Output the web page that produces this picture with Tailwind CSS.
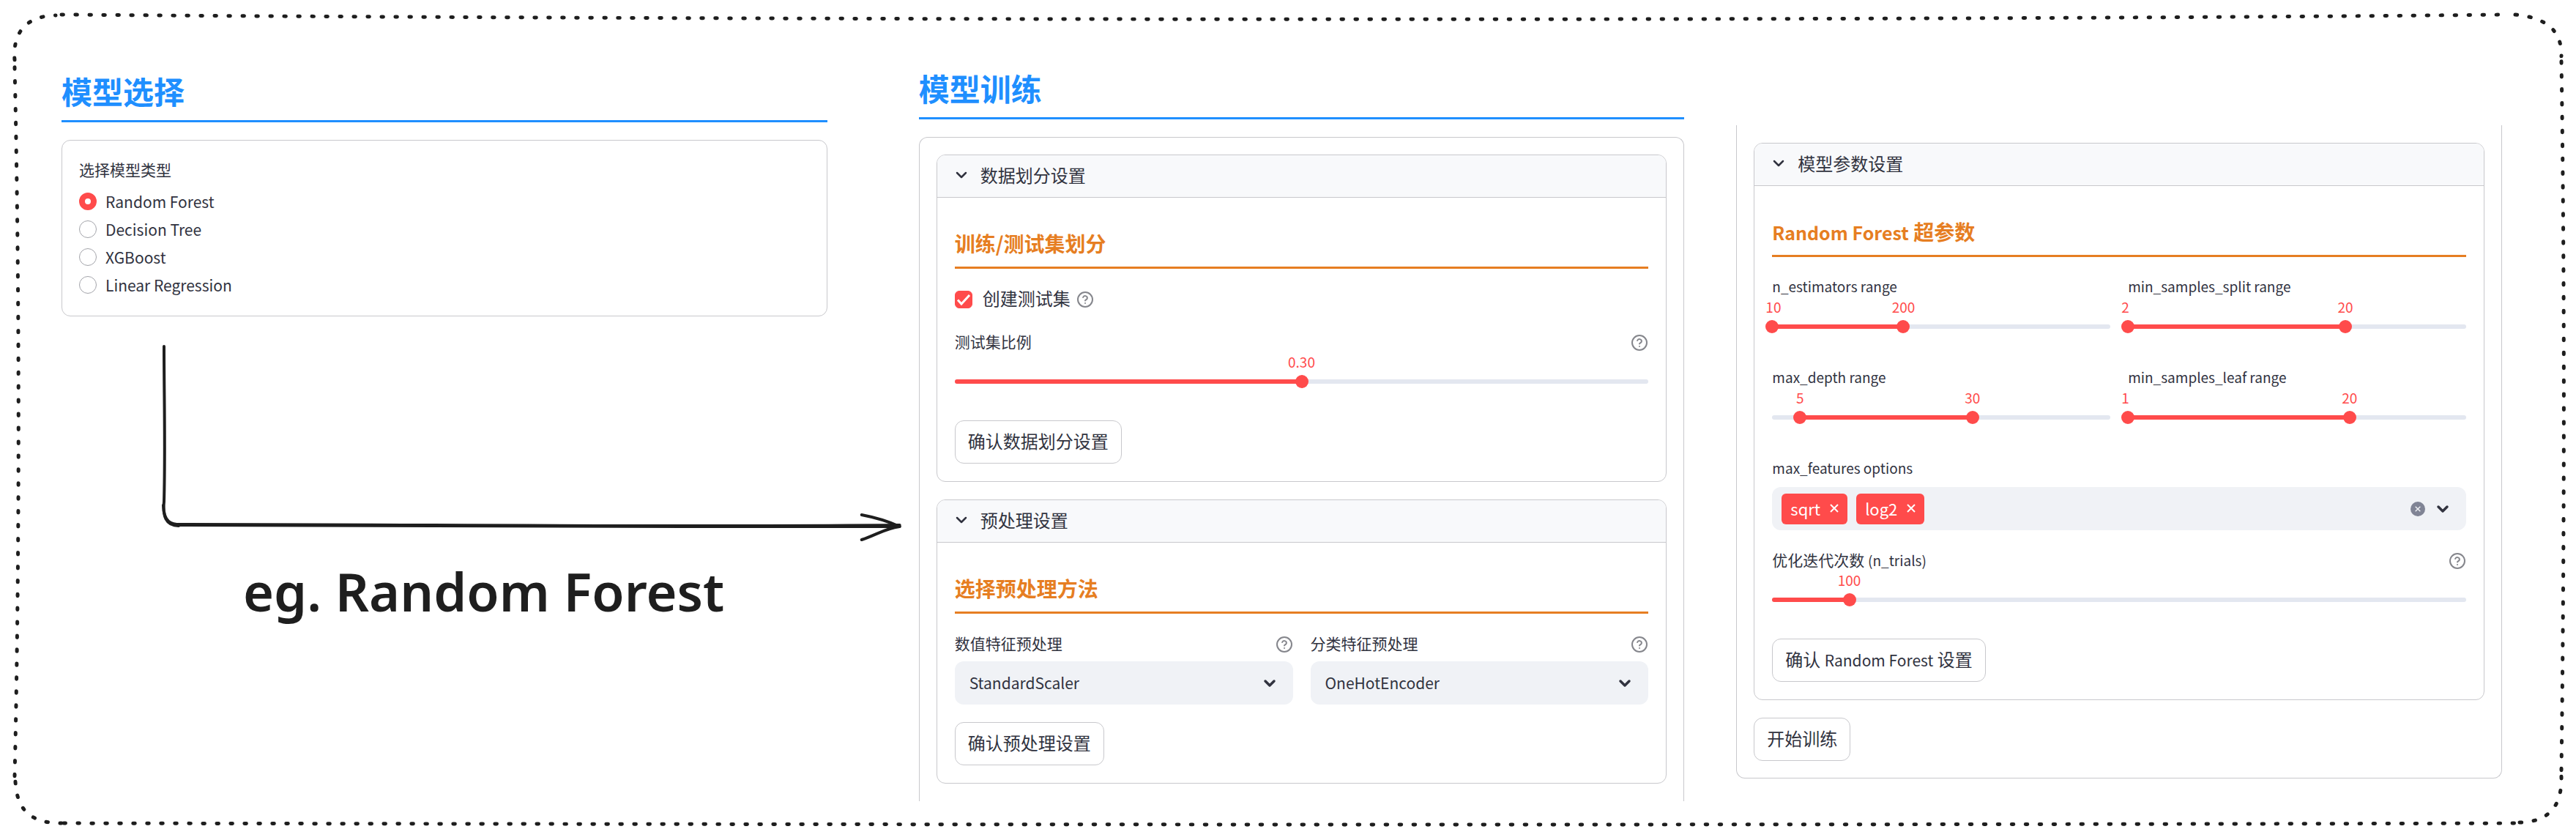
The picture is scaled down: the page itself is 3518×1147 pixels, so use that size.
<!DOCTYPE html>
<html lang="zh-CN">
<head>
<meta charset="utf-8">
<meta name="viewport" content="width=device-width, initial-scale=1">
<title>模型训练</title>
<script src="https://cdn.jsdelivr.net/npm/@tailwindcss/browser@4"></script>
</head>
<body class="bg-white font-['Noto_Sans_CJK_SC',sans-serif] text-[#31333f]">

<!-- shared icons -->
<svg class="hidden" aria-hidden="true">
  <symbol id="help" viewBox="0 0 24 24" fill="none" stroke="currentColor" stroke-width="2" stroke-linecap="round" stroke-linejoin="round">
    <circle cx="12" cy="12" r="10"/><path d="M9.1 9a3 3 0 0 1 5.8 1c0 2-2.9 2.6-2.9 3.6M12 17h.01"/>
  </symbol>
  <symbol id="chevron" viewBox="0 0 24 24" fill="none" stroke="currentColor" stroke-linecap="round" stroke-linejoin="round">
    <path d="M6 9l6 6 6-6"/>
  </symbol>
  <symbol id="cross" viewBox="0 0 12 12" fill="none" stroke="currentColor" stroke-width="2"><path d="M1 1l10 10M11 1L1 11"/></symbol>
</svg>

<main class="relative flex pr-[101px] pl-[84px] pb-[49px]">

  <!-- hand-drawn dotted frame -->
  <svg class="pointer-events-none absolute inset-0 h-full w-full" viewBox="0 0 3518 1147" preserveAspectRatio="none" fill="none" stroke="#1e1e1e" stroke-width="5" stroke-linecap="round" stroke-dasharray="2.5 16.5" aria-hidden="true">
    <path d="M84 20C900 27 2500 30 3427 20"/>
    <path d="M3435 20C3475 24 3499 40 3498 77"/>
    <path d="M3498 84C3503 400 3502 760 3498 1056"/>
    <path d="M3498 1064C3499 1106 3480 1126 3441 1127"/>
    <path d="M87 1128C1200 1130 2400 1131 3435 1128"/>
    <path d="M21 1071C23 1110 42 1128 84 1128"/>
    <path d="M20 92C27 400 27 760 20 1064"/>
    <path d="M20 82C17 42 38 22 76 21"/>
  </svg>

  <!-- model selection -->
  <section class="mr-[125px] min-w-0 flex-1 pt-[100px]">
    <h2 class="border-b-[3px] border-[#1f8fff] pb-4 text-[42px] leading-[48px] font-bold text-[#1f8fff]">模型选择</h2>
    <fieldset class="mt-6 rounded-xl border border-[#c8c8cc] p-[23px]">
      <legend class="float-left h-9 w-full text-[21px] leading-[32px]">选择模型类型</legend>
      <div class="clear-both pt-[5px] text-[21px] leading-[38px]">
        <label class="flex h-[38px] items-center gap-3"><input type="radio" name="model" checked class="size-6 appearance-none rounded-full border border-[#a3a4aa] checked:border-8 checked:border-[#ff4b4b]">Random Forest</label>
        <label class="flex h-[38px] items-center gap-3"><input type="radio" name="model" class="size-6 appearance-none rounded-full border border-[#a3a4aa] checked:border-8 checked:border-[#ff4b4b]">Decision Tree</label>
        <label class="flex h-[38px] items-center gap-3"><input type="radio" name="model" class="size-6 appearance-none rounded-full border border-[#a3a4aa] checked:border-8 checked:border-[#ff4b4b]">XGBoost</label>
        <label class="flex h-[38px] items-center gap-3"><input type="radio" name="model" class="size-6 appearance-none rounded-full border border-[#a3a4aa] checked:border-8 checked:border-[#ff4b4b]">Linear Regression</label>
      </div>
    </fieldset>
    <div class="mt-[38px] -mr-[104px] ml-[136px]">
      <svg class="block h-[270px] w-full" viewBox="220 470 1014 270" preserveAspectRatio="none" fill="none" stroke="#1e1e1e" stroke-width="4" stroke-linecap="round" stroke-linejoin="round" aria-hidden="true">
        <path d="M224 473C224 540 226 610 224 685C222 704 226 718 244 718"/>
        <path d="M223 690C224 712 232 717 250 716C560 716 900 720 1229 717"/>
        <path d="M246 717C560 719 900 719 1229 719"/>
        <path d="M1177 703C1198 707 1216 713 1229 719C1208 722 1198 730 1177 737"/>
      </svg>
    </div>
    <p class="mt-[22px] ml-[248px] font-['Excalifont','Noto_Sans',sans-serif] text-[72px] leading-[90px] font-semibold whitespace-nowrap text-[#1e1e1e]">eg. Random Forest</p>
  </section>

  <!-- model training -->
  <section class="mr-[71px] min-w-0 flex-1 pt-[96px]">
    <h2 class="border-b-[3px] border-[#1f8fff] pb-4 text-[42px] leading-[48px] font-bold text-[#1f8fff]">模型训练</h2>
    <div class="mt-6 flex flex-col gap-6 rounded-t-xl border-x border-t border-[#c8c8cc] px-[23px] pt-[23px] pb-6">

      <details open class="overflow-hidden rounded-xl border border-[#c8c8cc]">
        <summary class="flex h-[58px] list-none items-center gap-[14px] border-b border-[#c8c8cc] bg-[#f8f9fb] px-[21px] pb-[3px] text-[24px] leading-[54px]">
          <svg class="size-6 stroke-[2.5]"><use href="#chevron"/></svg>数据划分设置
        </summary>
        <div class="flex flex-col items-start gap-6 px-6 pb-6 pt-[46px]">
          <h3 class="w-full border-b-[3px] border-[#e67e22] pb-4 text-[28px] leading-[32px] font-bold text-[#e67e22]">训练/测试集划分</h3>
          <div class="flex h-[35px] items-center">
            <label class="flex items-center gap-[14px] text-[24px] leading-[32px]">
              <span class="grid size-6 place-items-center">
                <input type="checkbox" checked class="size-6 appearance-none rounded-md border border-[#a3a4aa] [grid-area:1/1] checked:border-[#ff4b4b] checked:bg-[#ff4b4b]">
                <svg class="pointer-events-none size-6 [grid-area:1/1]" viewBox="0 0 24 24" fill="none" stroke="#fff" stroke-width="3"><path d="M4 12.500l5 5.500L20 6"/></svg>
              </span><span class="pb-[3px]">创建测试集</span></label>
            <svg class="ml-2 size-6 text-[#85868c]"><use href="#help"/></svg>
          </div>
          <div class="w-full">
            <div class="flex h-9 items-center justify-between"><label for="ratio" class="pb-1 text-[21px] leading-[32px]">测试集比例</label><svg class="size-6 text-[#85868c]"><use href="#help"/></svg></div>
            <div class="relative h-[26px] text-[19px] leading-[16px] text-[#ff4b4b]"><output for="ratio" class="absolute -translate-x-1/2" style="left:50%">0.30</output></div>
            <div class="mb-[20px] grid h-[18px] items-center">
              <div class="h-[6px] overflow-hidden rounded-full bg-[#e3e7f0] [grid-area:1/1]"><div class="h-full bg-[#ff4b4b]" style="width:50%"></div></div>
              <input id="ratio" type="range" min="0.1" max="0.5" step="0.01" value="0.3" class="-mx-[9px] h-[18px] appearance-none bg-transparent [grid-area:1/1] [&::-webkit-slider-thumb]:size-[18px] [&::-webkit-slider-thumb]:appearance-none [&::-webkit-slider-thumb]:rounded-full [&::-webkit-slider-thumb]:bg-[#ff4b4b]">
            </div>
          </div>
          <button class="h-[59px] rounded-xl border border-[#c8c8cc] px-[17px] pb-[3px] text-[24px] leading-[50px]">确认数据划分设置</button>
        </div>
      </details>

      <details open class="overflow-hidden rounded-xl border border-[#c8c8cc]">
        <summary class="flex h-[58px] list-none items-center gap-[14px] border-b border-[#c8c8cc] bg-[#f8f9fb] px-[21px] pb-[3px] text-[24px] leading-[54px]">
          <svg class="size-6 stroke-[2.5]"><use href="#chevron"/></svg>预处理设置
        </summary>
        <div class="flex flex-col items-start gap-6 px-6 pb-6 pt-[46px]">
          <h3 class="w-full border-b-[3px] border-[#e67e22] pb-4 text-[28px] leading-[32px] font-bold text-[#e67e22]">选择预处理方法</h3>
          <div class="grid w-full grid-cols-2 gap-6">
            <div>
              <div class="mb-[5px] flex h-9 items-center justify-between"><label for="num" class="pb-1 text-[21px] leading-[32px]">数值特征预处理</label><svg class="size-6 text-[#85868c]"><use href="#help"/></svg></div>
              <div class="grid items-center">
                <select id="num" class="h-[59px] w-full appearance-none rounded-xl bg-[#f0f2f6] px-5 text-[21px] [grid-area:1/1]"><option>StandardScaler</option></select>
                <svg class="pointer-events-none mr-5 size-6 justify-self-end stroke-[3.5] [grid-area:1/1]"><use href="#chevron"/></svg>
              </div>
            </div>
            <div>
              <div class="mb-[5px] flex h-9 items-center justify-between"><label for="cat" class="pb-1 text-[21px] leading-[32px]">分类特征预处理</label><svg class="size-6 text-[#85868c]"><use href="#help"/></svg></div>
              <div class="grid items-center">
                <select id="cat" class="h-[59px] w-full appearance-none rounded-xl bg-[#f0f2f6] px-5 text-[21px] [grid-area:1/1]"><option>OneHotEncoder</option></select>
                <svg class="pointer-events-none mr-5 size-6 justify-self-end stroke-[3.5] [grid-area:1/1]"><use href="#chevron"/></svg>
              </div>
            </div>
          </div>
          <button class="h-[59px] rounded-xl border border-[#c8c8cc] px-[17px] pb-[3px] text-[24px] leading-[50px]">确认预处理设置</button>
        </div>
      </details>
    </div>
  </section>

  <!-- model parameters -->
  <section class="min-w-0 flex-1 pt-[171px]">
    <div class="flex flex-col items-start gap-6 rounded-b-xl border-x border-b border-[#c8c8cc] px-[23px] pt-6 pb-[23px]">
      <details open class="w-full overflow-hidden rounded-xl border border-[#c8c8cc]">
        <summary class="flex h-[58px] list-none items-center gap-[14px] border-b border-[#c8c8cc] bg-[#f8f9fb] px-[21px] pb-[3px] text-[24px] leading-[54px]">
          <svg class="size-6 stroke-[2.5]"><use href="#chevron"/></svg>模型参数设置
        </summary>
        <div class="flex flex-col items-start gap-6 px-6 pb-6 pt-[46px]">
          <h3 class="w-full border-b-[3px] border-[#e67e22] pb-4 text-[28px] leading-[32px] font-bold text-[#e67e22]"><span class="text-[25px] leading-none">Random Forest</span> 超参数</h3>

          <div class="grid w-full grid-cols-2 gap-6">
            <div role="group" aria-labelledby="l1">
              <div id="l1" class="h-9 text-[19px] leading-[32px]">n_estimators range</div>
              <div class="relative h-[26px] text-[19px] leading-[16px] text-[#ff4b4b]"><output class="absolute -left-[9px]">10</output><output class="absolute -translate-x-1/2" style="left:38.8%">200</output></div>
              <div class="mb-[20px] grid h-[18px] items-center">
                <div class="h-[6px] overflow-hidden rounded-full bg-[#e3e7f0] [grid-area:1/1]"><div class="h-full bg-[#ff4b4b]" style="width:38.8%"></div></div>
                <input type="range" aria-label="min" min="10" max="500" value="10" class="pointer-events-none -mx-[9px] h-[18px] appearance-none bg-transparent [grid-area:1/1] [&::-webkit-slider-thumb]:pointer-events-auto [&::-webkit-slider-thumb]:size-[18px] [&::-webkit-slider-thumb]:appearance-none [&::-webkit-slider-thumb]:rounded-full [&::-webkit-slider-thumb]:bg-[#ff4b4b]">
                <input type="range" aria-label="max" min="10" max="500" value="200" class="pointer-events-none -mx-[9px] h-[18px] appearance-none bg-transparent [grid-area:1/1] [&::-webkit-slider-thumb]:pointer-events-auto [&::-webkit-slider-thumb]:size-[18px] [&::-webkit-slider-thumb]:appearance-none [&::-webkit-slider-thumb]:rounded-full [&::-webkit-slider-thumb]:bg-[#ff4b4b]">
              </div>
            </div>
            <div role="group" aria-labelledby="l2">
              <div id="l2" class="h-9 text-[19px] leading-[32px]">min_samples_split range</div>
              <div class="relative h-[26px] text-[19px] leading-[16px] text-[#ff4b4b]"><output class="absolute -left-[9px]">2</output><output class="absolute -translate-x-1/2" style="left:64.3%">20</output></div>
              <div class="mb-[20px] grid h-[18px] items-center">
                <div class="h-[6px] overflow-hidden rounded-full bg-[#e3e7f0] [grid-area:1/1]"><div class="h-full bg-[#ff4b4b]" style="width:64.3%"></div></div>
                <input type="range" aria-label="min" min="2" max="30" value="2" class="pointer-events-none -mx-[9px] h-[18px] appearance-none bg-transparent [grid-area:1/1] [&::-webkit-slider-thumb]:pointer-events-auto [&::-webkit-slider-thumb]:size-[18px] [&::-webkit-slider-thumb]:appearance-none [&::-webkit-slider-thumb]:rounded-full [&::-webkit-slider-thumb]:bg-[#ff4b4b]">
                <input type="range" aria-label="max" min="2" max="30" value="20" class="pointer-events-none -mx-[9px] h-[18px] appearance-none bg-transparent [grid-area:1/1] [&::-webkit-slider-thumb]:pointer-events-auto [&::-webkit-slider-thumb]:size-[18px] [&::-webkit-slider-thumb]:appearance-none [&::-webkit-slider-thumb]:rounded-full [&::-webkit-slider-thumb]:bg-[#ff4b4b]">
              </div>
            </div>
            <div role="group" aria-labelledby="l3">
              <div id="l3" class="h-9 text-[19px] leading-[32px]">max_depth range</div>
              <div class="relative h-[26px] text-[19px] leading-[16px] text-[#ff4b4b]"><output class="absolute -translate-x-1/2" style="left:8.2%">5</output><output class="absolute -translate-x-1/2" style="left:59.2%">30</output></div>
              <div class="mb-[20px] grid h-[18px] items-center">
                <div class="h-[6px] overflow-hidden rounded-full bg-[#e3e7f0] [grid-area:1/1]"><div class="h-full bg-[#ff4b4b]" style="margin-left:8.2%;width:51%"></div></div>
                <input type="range" aria-label="min" min="1" max="50" value="5" class="pointer-events-none -mx-[9px] h-[18px] appearance-none bg-transparent [grid-area:1/1] [&::-webkit-slider-thumb]:pointer-events-auto [&::-webkit-slider-thumb]:size-[18px] [&::-webkit-slider-thumb]:appearance-none [&::-webkit-slider-thumb]:rounded-full [&::-webkit-slider-thumb]:bg-[#ff4b4b]">
                <input type="range" aria-label="max" min="1" max="50" value="30" class="pointer-events-none -mx-[9px] h-[18px] appearance-none bg-transparent [grid-area:1/1] [&::-webkit-slider-thumb]:pointer-events-auto [&::-webkit-slider-thumb]:size-[18px] [&::-webkit-slider-thumb]:appearance-none [&::-webkit-slider-thumb]:rounded-full [&::-webkit-slider-thumb]:bg-[#ff4b4b]">
              </div>
            </div>
            <div role="group" aria-labelledby="l4">
              <div id="l4" class="h-9 text-[19px] leading-[32px]">min_samples_leaf range</div>
              <div class="relative h-[26px] text-[19px] leading-[16px] text-[#ff4b4b]"><output class="absolute -left-[9px]">1</output><output class="absolute -translate-x-1/2" style="left:65.5%">20</output></div>
              <div class="mb-[20px] grid h-[18px] items-center">
                <div class="h-[6px] overflow-hidden rounded-full bg-[#e3e7f0] [grid-area:1/1]"><div class="h-full bg-[#ff4b4b]" style="width:65.5%"></div></div>
                <input type="range" aria-label="min" min="1" max="30" value="1" class="pointer-events-none -mx-[9px] h-[18px] appearance-none bg-transparent [grid-area:1/1] [&::-webkit-slider-thumb]:pointer-events-auto [&::-webkit-slider-thumb]:size-[18px] [&::-webkit-slider-thumb]:appearance-none [&::-webkit-slider-thumb]:rounded-full [&::-webkit-slider-thumb]:bg-[#ff4b4b]">
                <input type="range" aria-label="max" min="1" max="30" value="20" class="pointer-events-none -mx-[9px] h-[18px] appearance-none bg-transparent [grid-area:1/1] [&::-webkit-slider-thumb]:pointer-events-auto [&::-webkit-slider-thumb]:size-[18px] [&::-webkit-slider-thumb]:appearance-none [&::-webkit-slider-thumb]:rounded-full [&::-webkit-slider-thumb]:bg-[#ff4b4b]">
              </div>
            </div>
          </div>

          <div class="w-full" role="group" aria-labelledby="l5">
            <div id="l5" class="mb-[6px] h-9 text-[19px] leading-[32px]">max_features options</div>
            <div class="flex h-[59px] items-center gap-3 rounded-xl bg-[#f0f2f6] pr-5 pl-[13px]">
              <span class="flex h-[42px] items-center gap-[13px] rounded-md bg-[#ff4b4b] px-3 pb-[2px] text-[22px] leading-[38px] text-white">sqrt<button aria-label="移除 sqrt"><svg class="size-3"><use href="#cross"/></svg></button></span>
              <span class="flex h-[42px] items-center gap-[13px] rounded-md bg-[#ff4b4b] px-3 pb-[2px] text-[22px] leading-[38px] text-white">log2<button aria-label="移除 log2"><svg class="size-3"><use href="#cross"/></svg></button></span>
              <button aria-label="清除" class="ml-auto grid size-5 place-items-center rounded-full bg-[#808495] text-[#f0f2f6]"><svg class="size-2"><use href="#cross"/></svg></button>
              <button aria-label="展开"><svg class="size-6 stroke-[3.5]"><use href="#chevron"/></svg></button>
            </div>
          </div>

          <div class="w-full">
            <div class="flex h-9 items-center justify-between"><label for="trials" class="pb-1 text-[21px] leading-[32px]">优化迭代次数 <span class="text-[19px] leading-none">(n_trials)</span></label><svg class="size-6 text-[#85868c]"><use href="#help"/></svg></div>
            <div class="relative h-[26px] text-[19px] leading-[16px] text-[#ff4b4b]"><output for="trials" class="absolute -translate-x-1/2" style="left:11.1%">100</output></div>
            <div class="mb-[20px] grid h-[18px] items-center">
              <div class="h-[6px] overflow-hidden rounded-full bg-[#e3e7f0] [grid-area:1/1]"><div class="h-full bg-[#ff4b4b]" style="width:11.1%"></div></div>
              <input id="trials" type="range" min="50" max="500" value="100" class="-mx-[9px] h-[18px] appearance-none bg-transparent [grid-area:1/1] [&::-webkit-slider-thumb]:size-[18px] [&::-webkit-slider-thumb]:appearance-none [&::-webkit-slider-thumb]:rounded-full [&::-webkit-slider-thumb]:bg-[#ff4b4b]">
            </div>
          </div>
          <button class="h-[59px] rounded-xl border border-[#c8c8cc] px-[17px] pb-[3px] text-[24px] leading-[50px]">确认 <span class="text-[21px] leading-none">Random Forest</span> 设置</button>
        </div>
      </details>
      <button class="h-[59px] rounded-xl border border-[#c8c8cc] px-[17px] pb-[3px] text-[24px] leading-[50px]">开始训练</button>
    </div>
  </section>
</main>
</body>
</html>
